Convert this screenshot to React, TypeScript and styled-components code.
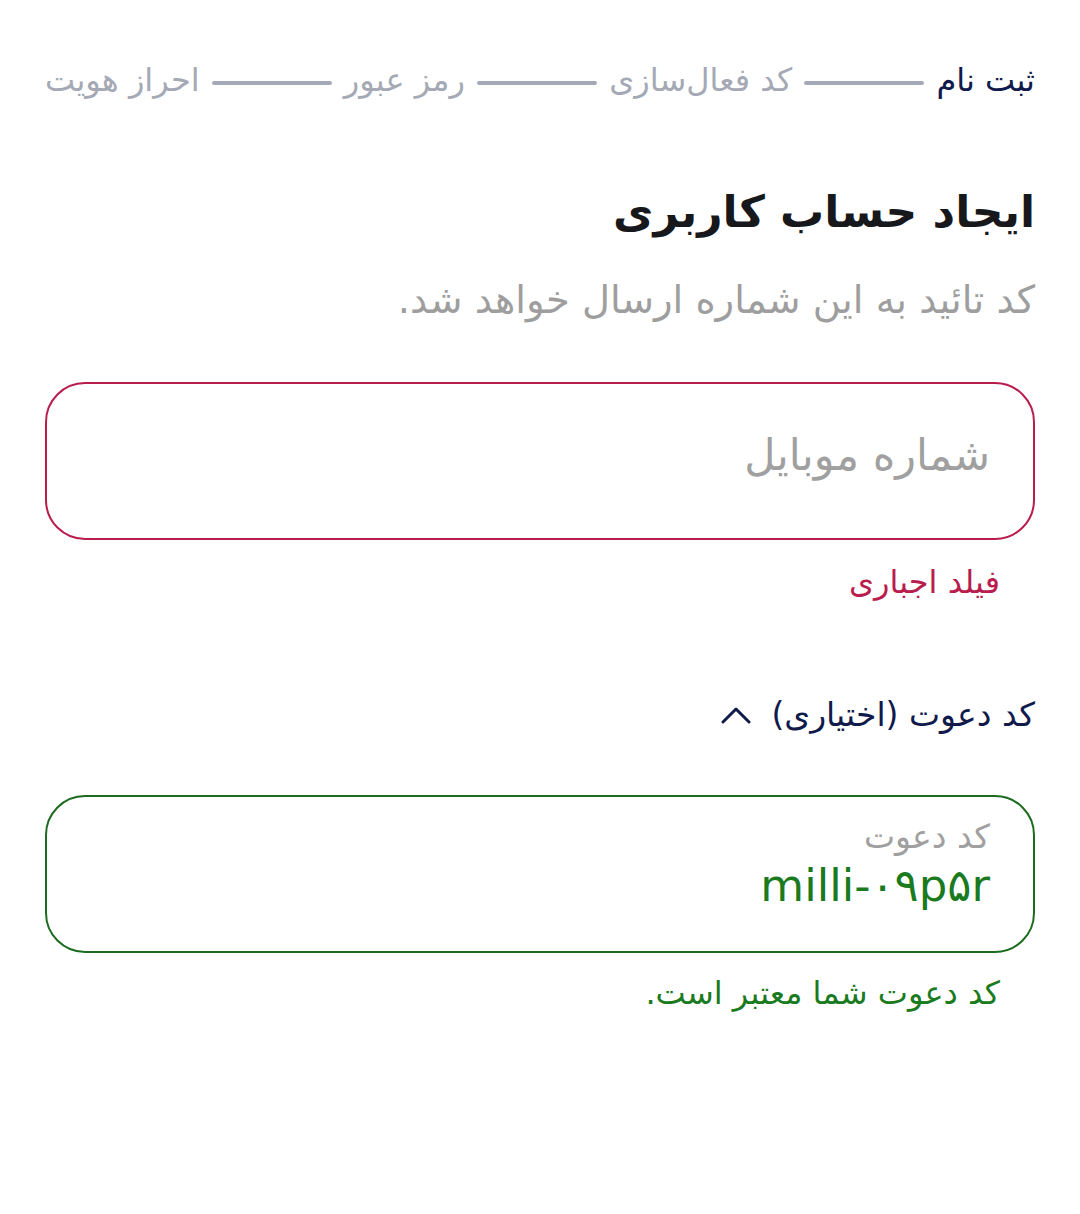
import { Fragment } from 'react';
import styled, { createGlobalStyle } from 'styled-components';

const GlobalStyle = createGlobalStyle`
	body {
		margin: 0;
		background: #ffffff;
		font-family: 'DejaVu Sans', 'Noto Sans', sans-serif;
	}
`;

const Page = styled.div`
	direction: rtl;
	padding: 58px 45px 80px;
	display: flex;
	flex-direction: column;
`;

const Stepper = styled.div`
	display: flex;
	align-items: center;
	gap: 12px;
`;

const StepLabel = styled.span<{ $active?: boolean }>`
	font-size: 32px;
	line-height: 44px;
	white-space: nowrap;
	color: ${({ $active }) => ($active ? '#101a4b' : '#a4a9b5')};
`;

const StepLine = styled.span`
	flex: 1;
	height: 4px;
	margin-top: 6px;
	background: #a4a9b5;
	border-radius: 2px;
`;

const Title = styled.h1`
	margin: 80px 0 0;
	font-size: 44px;
	line-height: 60px;
	font-weight: 700;
	color: #17181c;
`;

const Subtitle = styled.p`
	margin: 33px 0 0;
	font-size: 38.5px;
	line-height: 50px;
	color: #9e9e9e;
`;

const Field = styled.div<{ $tone: 'error' | 'success' }>`
	height: 158px;
	box-sizing: border-box;
	border: 2px solid ${({ $tone }) => ($tone === 'error' ? '#b81d4d' : '#1c6b1f')};
	border-radius: 40px;
	padding: 0 43px;
	display: flex;
	flex-direction: column;
`;

const PhoneField = styled(Field)`
	margin-top: 57px;
	justify-content: center;
	padding-bottom: 12px;
`;

const InviteField = styled(Field)`
	margin-top: 60px;
	padding-top: 18px;
`;

const Placeholder = styled.span`
	font-size: 43px;
	line-height: 56px;
	color: #a0a0a0;
`;

const FieldLabel = styled.span`
	font-size: 33px;
	line-height: 44px;
	color: #a0a0a0;
`;

const FieldValue = styled.span`
	font-size: 45px;
	line-height: 54px;
	color: #1a7a1e;
`;

const Helper = styled.p<{ $tone: 'error' | 'success' }>`
	margin: ${({ $tone }) => ($tone === 'error' ? '22px' : '20px')} 35px 0 0;
	font-size: 32px;
	line-height: 40px;
	color: ${({ $tone }) => ($tone === 'error' ? '#b81d4d' : '#1a7a1e')};
`;

const ToggleRow = styled.button`
	margin: 93px 0 0;
	padding: 0;
	border: none;
	background: none;
	align-self: flex-start;
	display: flex;
	align-items: center;
	gap: 20px;
	font-family: inherit;
	font-size: 33px;
	line-height: 40px;
	color: #101a4b;
	cursor: pointer;
`;

const steps = ['ثبت نام', 'کد فعال‌سازی', 'رمز عبور', 'احراز هویت'];

export default function App() {
	const activeStep = 0;

	return (
		<>
			<GlobalStyle />
			<Page>
				<Stepper>
					{steps.map((step, i) => (
						<Fragment key={step}>
							{i > 0 && <StepLine />}
							<StepLabel $active={i === activeStep}>{step}</StepLabel>
						</Fragment>
					))}
				</Stepper>

				<Title>ایجاد حساب کاربری</Title>
				<Subtitle>کد تائید به این شماره ارسال خواهد شد.</Subtitle>

				<PhoneField $tone="error">
					<Placeholder>شماره موبایل</Placeholder>
				</PhoneField>
				<Helper $tone="error">فیلد اجباری</Helper>

				<ToggleRow type="button">
					<span>کد دعوت (اختیاری)</span>
					<svg width="30" height="18" viewBox="0 0 30 18" fill="none">
						<polyline
							points="2,16 15,3 28,16"
							stroke="#101a4b"
							strokeWidth="3"
							strokeLinecap="round"
							strokeLinejoin="round"
						/>
					</svg>
				</ToggleRow>

				<InviteField $tone="success">
					<FieldLabel>کد دعوت</FieldLabel>
					<FieldValue>milli-۰۹p۵r</FieldValue>
				</InviteField>
				<Helper $tone="success">کد دعوت شما معتبر است.</Helper>
			</Page>
		</>
	);
}
